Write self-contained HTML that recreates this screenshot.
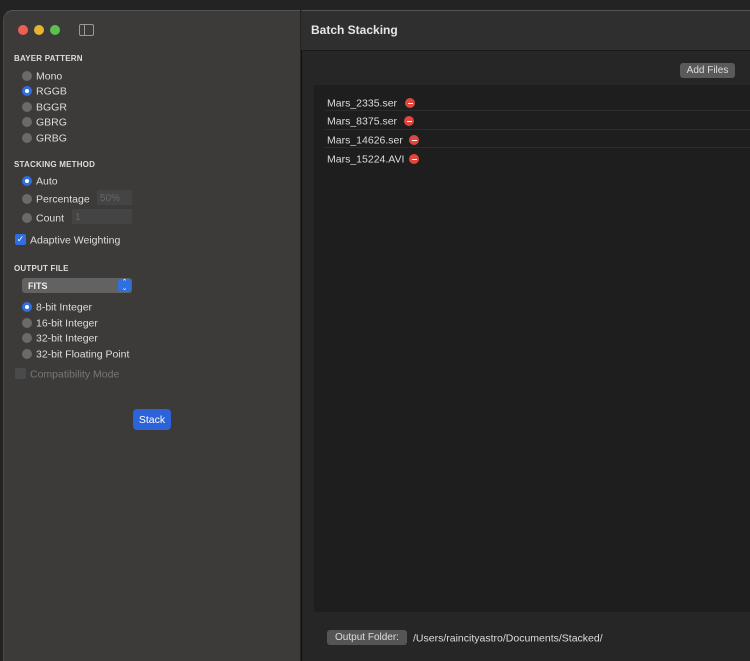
<!DOCTYPE html>
<html><head><style>
*{margin:0;padding:0;box-sizing:border-box}
body{width:750px;height:661px;background:#232323;font-family:"Liberation Sans",sans-serif;position:relative;overflow:hidden;color:#e0e0e0}
.a{position:absolute}
#side{left:3px;top:10px;width:297px;height:651px;background:#3c3b3a;border-top-left-radius:10px;border-top:1px solid #555;border-left:1px solid #4a4a4a}
#right{left:301px;top:10px;width:449px;height:651px;background:#262626;border-top:1px solid #555;border-left:1px solid #111}
#hdr{left:301px;top:11px;width:449px;height:40px;background:#2f2f2f;border-bottom:1px solid #1a1a1a}
.dot{width:10px;height:10px;border-radius:50%;top:25px}
.h{font-size:8px;font-weight:bold;color:#ddd;letter-spacing:.2px;transform:translateY(1px)}
.r{width:10px;height:10px;border-radius:50%;background:#6a6a6a;transform:translateY(1px)}
.r.on{background:#2f6fe0}
.r.on::after{content:"";position:absolute;left:3px;top:3px;width:4px;height:4px;border-radius:50%;background:#fff}
.t{font-size:10.5px;color:#ddd;transform:translateY(1.5px)}
.f{font-size:10.5px;color:#ddd;transform:translateY(1.5px)}
.m{width:10px;height:10px;border-radius:50%;background:#e0473c;transform:translateY(1px)}
.m::after{content:"";position:absolute;left:2.5px;top:4.5px;width:5px;height:1.2px;background:#fff}
.line{height:1px;background:#2c2c2c;left:325px;width:425px}
.b{line-height:16px!important}
</style></head><body>
<div class="a" id="side"></div>
<div class="a" id="right"></div>
<div class="a" id="hdr"></div>
<div class="a dot" style="left:18px;background:#ec5f57"></div>
<div class="a dot" style="left:34px;background:#e6b330"></div>
<div class="a dot" style="left:50px;background:#5bc04c"></div>
<div class="a" style="left:79px;top:24px;width:15px;height:12px;border:1.3px solid #999;border-radius:2px"></div>
<div class="a" style="left:84px;top:24px;width:1.3px;height:12px;background:#999"></div>

<div class="a h" style="left:14px;top:53px">BAYER PATTERN</div>
<div class="a r" style="left:22px;top:70px"></div><div class="a t" style="left:36px;top:69px">Mono</div>
<div class="a r on" style="left:22px;top:85px"></div><div class="a t" style="left:36px;top:84px">RGGB</div>
<div class="a r" style="left:22px;top:101px"></div><div class="a t" style="left:36px;top:100px">BGGR</div>
<div class="a r" style="left:22px;top:116px"></div><div class="a t" style="left:36px;top:115px">GBRG</div>
<div class="a r" style="left:22px;top:132px"></div><div class="a t" style="left:36px;top:131px">GRBG</div>

<div class="a h" style="left:14px;top:159px">STACKING METHOD</div>
<div class="a r on" style="left:22px;top:175px"></div><div class="a t" style="left:36px;top:174px">Auto</div>
<div class="a r" style="left:22px;top:193px"></div><div class="a t" style="left:36px;top:192px">Percentage</div>
<div class="a" style="left:97px;top:190px;width:35px;height:15px;background:#444;font-size:10px;color:#666;padding:3px 3px">50%</div>
<div class="a r" style="left:22px;top:212px"></div><div class="a t" style="left:36px;top:211px">Count</div>
<div class="a" style="left:72px;top:209px;width:60px;height:15px;background:#444;font-size:10px;color:#666;padding:3px 3px">1</div>
<div class="a" style="left:15px;top:234px;width:11px;height:11px;border-radius:2px;background:#2f6fe0;color:#fff;font-size:9px;line-height:11px;text-align:center">✓</div>
<div class="a t" style="left:30px;top:233px">Adaptive Weighting</div>

<div class="a h" style="left:14px;top:263px">OUTPUT FILE</div>
<div class="a" style="left:22px;top:278px;width:110px;height:15px;background:#626262;border-radius:3px;font-size:9px;font-weight:bold;padding:3px 6px;color:#eee">FITS</div>
<div class="a" style="left:118px;top:279px;width:13px;height:13px;background:#2f6fe0;border-radius:3px;color:#fff;font-size:7px;line-height:6px;text-align:center;padding-top:1px">⌃<br>⌄</div>
<div class="a r on" style="left:22px;top:301px"></div><div class="a t" style="left:36px;top:300px">8-bit Integer</div>
<div class="a r" style="left:22px;top:317px"></div><div class="a t" style="left:36px;top:316px">16-bit Integer</div>
<div class="a r" style="left:22px;top:332px"></div><div class="a t" style="left:36px;top:331px">32-bit Integer</div>
<div class="a r" style="left:22px;top:348px"></div><div class="a t" style="left:36px;top:347px">32-bit Floating Point</div>
<div class="a" style="left:15px;top:368px;width:11px;height:11px;border-radius:2px;background:#4a4a4a"></div>
<div class="a t" style="left:30px;top:367px;color:#777">Compatibility Mode</div>
<div class="a" style="left:133px;top:409px;width:38px;height:21px;background:#2d63d8;border-radius:4px;font-size:10.5px;color:#fff;text-align:center;line-height:22px">Stack</div>

<div class="a" style="left:311px;top:23px;font-size:12px;font-weight:bold;color:#e6e6e6">Batch Stacking</div>
<div class="a b" style="left:680px;top:63px;width:55px;height:15px;background:#5a5a5a;border-radius:3px;font-size:10px;color:#ddd;text-align:center">Add Files</div>
<div class="a" style="left:314px;top:85px;width:436px;height:527px;background:#1e1e1e"></div>
<div class="a f" style="left:327px;top:96px">Mars_2335.ser</div><div class="a m" style="left:405px;top:97px"></div>
<div class="a line" style="top:110px"></div>
<div class="a f" style="left:327px;top:114px">Mars_8375.ser</div><div class="a m" style="left:404px;top:115px"></div>
<div class="a line" style="top:129px"></div>
<div class="a f" style="left:327px;top:133px">Mars_14626.ser</div><div class="a m" style="left:409px;top:134px"></div>
<div class="a line" style="top:147px"></div>
<div class="a f" style="left:327px;top:152px">Mars_15224.AVI</div><div class="a m" style="left:409px;top:153px"></div>
<div class="a b" style="left:327px;top:630px;width:80px;height:15px;background:#555;border-radius:3px;font-size:10px;color:#ddd;text-align:center">Output Folder:</div>
<div class="a f" style="left:413px;top:631px">/Users/raincityastro/Documents/Stacked/</div>
</body></html>
